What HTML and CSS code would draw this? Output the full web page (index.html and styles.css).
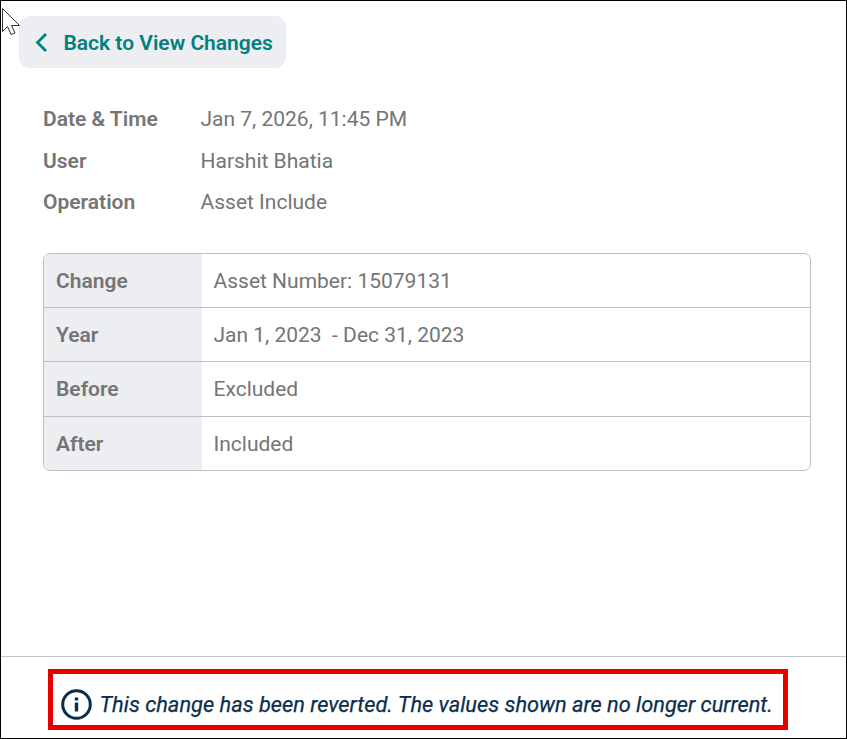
FILE: index.html
```html
<!DOCTYPE html>
<html lang="en">
<head>
<meta charset="utf-8">
<title>Change details</title>
<link rel="stylesheet" href="styles.css">
</head>
<body>
<div class="frame">
  <svg class="cursor" width="22" height="36" viewBox="0 0 22 36"><path d="M2.500 7.500V30.500L7.500 25.500L11 33.500L15 32L11.500 24.500H19.500Z" fill="#fff" stroke="#333" stroke-width="1"/></svg>
  <main class="content">
    <a class="back" href="#">
      <svg class="back-icon" width="14" height="20" viewBox="0 0 14 20"><path d="M12 1L3.500 9.500L12 18" fill="none" stroke="#008080" stroke-width="2.800"/></svg>
      <span>Back to View Changes</span>
    </a>
    <dl class="meta">
      <div class="meta-row"><dt>Date &amp; Time</dt><dd>Jan 7, 2026, 11:45 PM</dd></div>
      <div class="meta-row"><dt>User</dt><dd>Harshit Bhatia</dd></div>
      <div class="meta-row"><dt>Operation</dt><dd>Asset Include</dd></div>
    </dl>
    <div class="table">
      <div class="row"><div class="label">Change</div><div class="value">Asset Number: 15079131</div></div>
      <div class="row"><div class="label">Year</div><div class="value">Jan 1, 2023 &nbsp;- Dec 31, 2023</div></div>
      <div class="row"><div class="label">Before</div><div class="value">Excluded</div></div>
      <div class="row"><div class="label">After</div><div class="value">Included</div></div>
    </div>
  </main>
  <footer class="footer">
    <div class="notice">
      <svg class="info" width="31" height="31" viewBox="0 0 31 31"><circle cx="15.500" cy="15.500" r="13.800" fill="none" stroke="#0b2e4d" stroke-width="3"/><rect x="13.800" y="13.500" width="3.400" height="9" fill="#0b2e4d"/><rect x="13.800" y="8.500" width="3.400" height="3" fill="#0b2e4d"/></svg>
      <span>This change has been reverted. The values shown are no longer current.</span>
    </div>
  </footer>
</div>
</body>
</html>
```
FILE: styles.css
```css
* { box-sizing: border-box; }
html, body { margin: 0; padding: 0; }
body { font-family: Roboto, "Liberation Sans", sans-serif; background: #fff; }
.frame {
  position: relative;
  width: 847px;
  height: 739px;
  border: 1px solid #000;
  display: flex;
  flex-direction: column;
  overflow: hidden;
}
.cursor { position: absolute; left: -1px; top: 0; }
.content { flex: 1; padding: 15px 35px 0 18px; }
.back {
  display: flex;
  align-items: center;
  gap: 15.500px;
  height: 52px;
  width: 267px;
  padding: 2px 0 0 15px;
  background: #eceef2;
  border-radius: 11px;
  color: #008080;
  font-size: 21px;
  font-weight: 600;
  text-decoration: none;
}
.meta { margin: 30.250px 0 0 24px; }
.meta-row { display: flex; height: 41.500px; align-items: center; font-size: 21px; }
.meta dt { width: 157.500px; font-weight: 600; color: #757575; }
.meta dd { margin: 0; color: #757575; }
.table {
  margin: 30.050px 0 0 24px;
  border: 1px solid #bcc0c6;
  border-radius: 7px;
  overflow: hidden;
  width: 768px;
  height: 218px;
  display: flex;
  flex-direction: column;
}
.row { flex: none; height: 54.300px; display: flex; font-size: 21px; color: #757575; border-bottom: 1px solid #bcc0c6; }
.row:last-child { border-bottom: 0; }
.label { width: 158px; background: #eceef2; font-weight: 600; padding: 0.600px 0 0 12px; display: flex; align-items: center; }
.value { flex: 1; padding: 0.600px 0 0 11.500px; display: flex; align-items: center; white-space: pre; }
.footer {
  height: 82px;
  border-top: 1px solid #c4c6cc;
  padding: 12px 0 0 47px;
}
.notice {
  display: flex;
  align-items: center;
  gap: 8px;
  width: 740px;
  height: 61px;
  border: 5px solid #e60000;
  padding: 9px 0 0 7.500px;
  color: #0b2e4d;
  font-size: 21.800px;
  -webkit-text-stroke: 0.250px #0b2e4d;
  font-style: italic;
  white-space: nowrap;
}
```
